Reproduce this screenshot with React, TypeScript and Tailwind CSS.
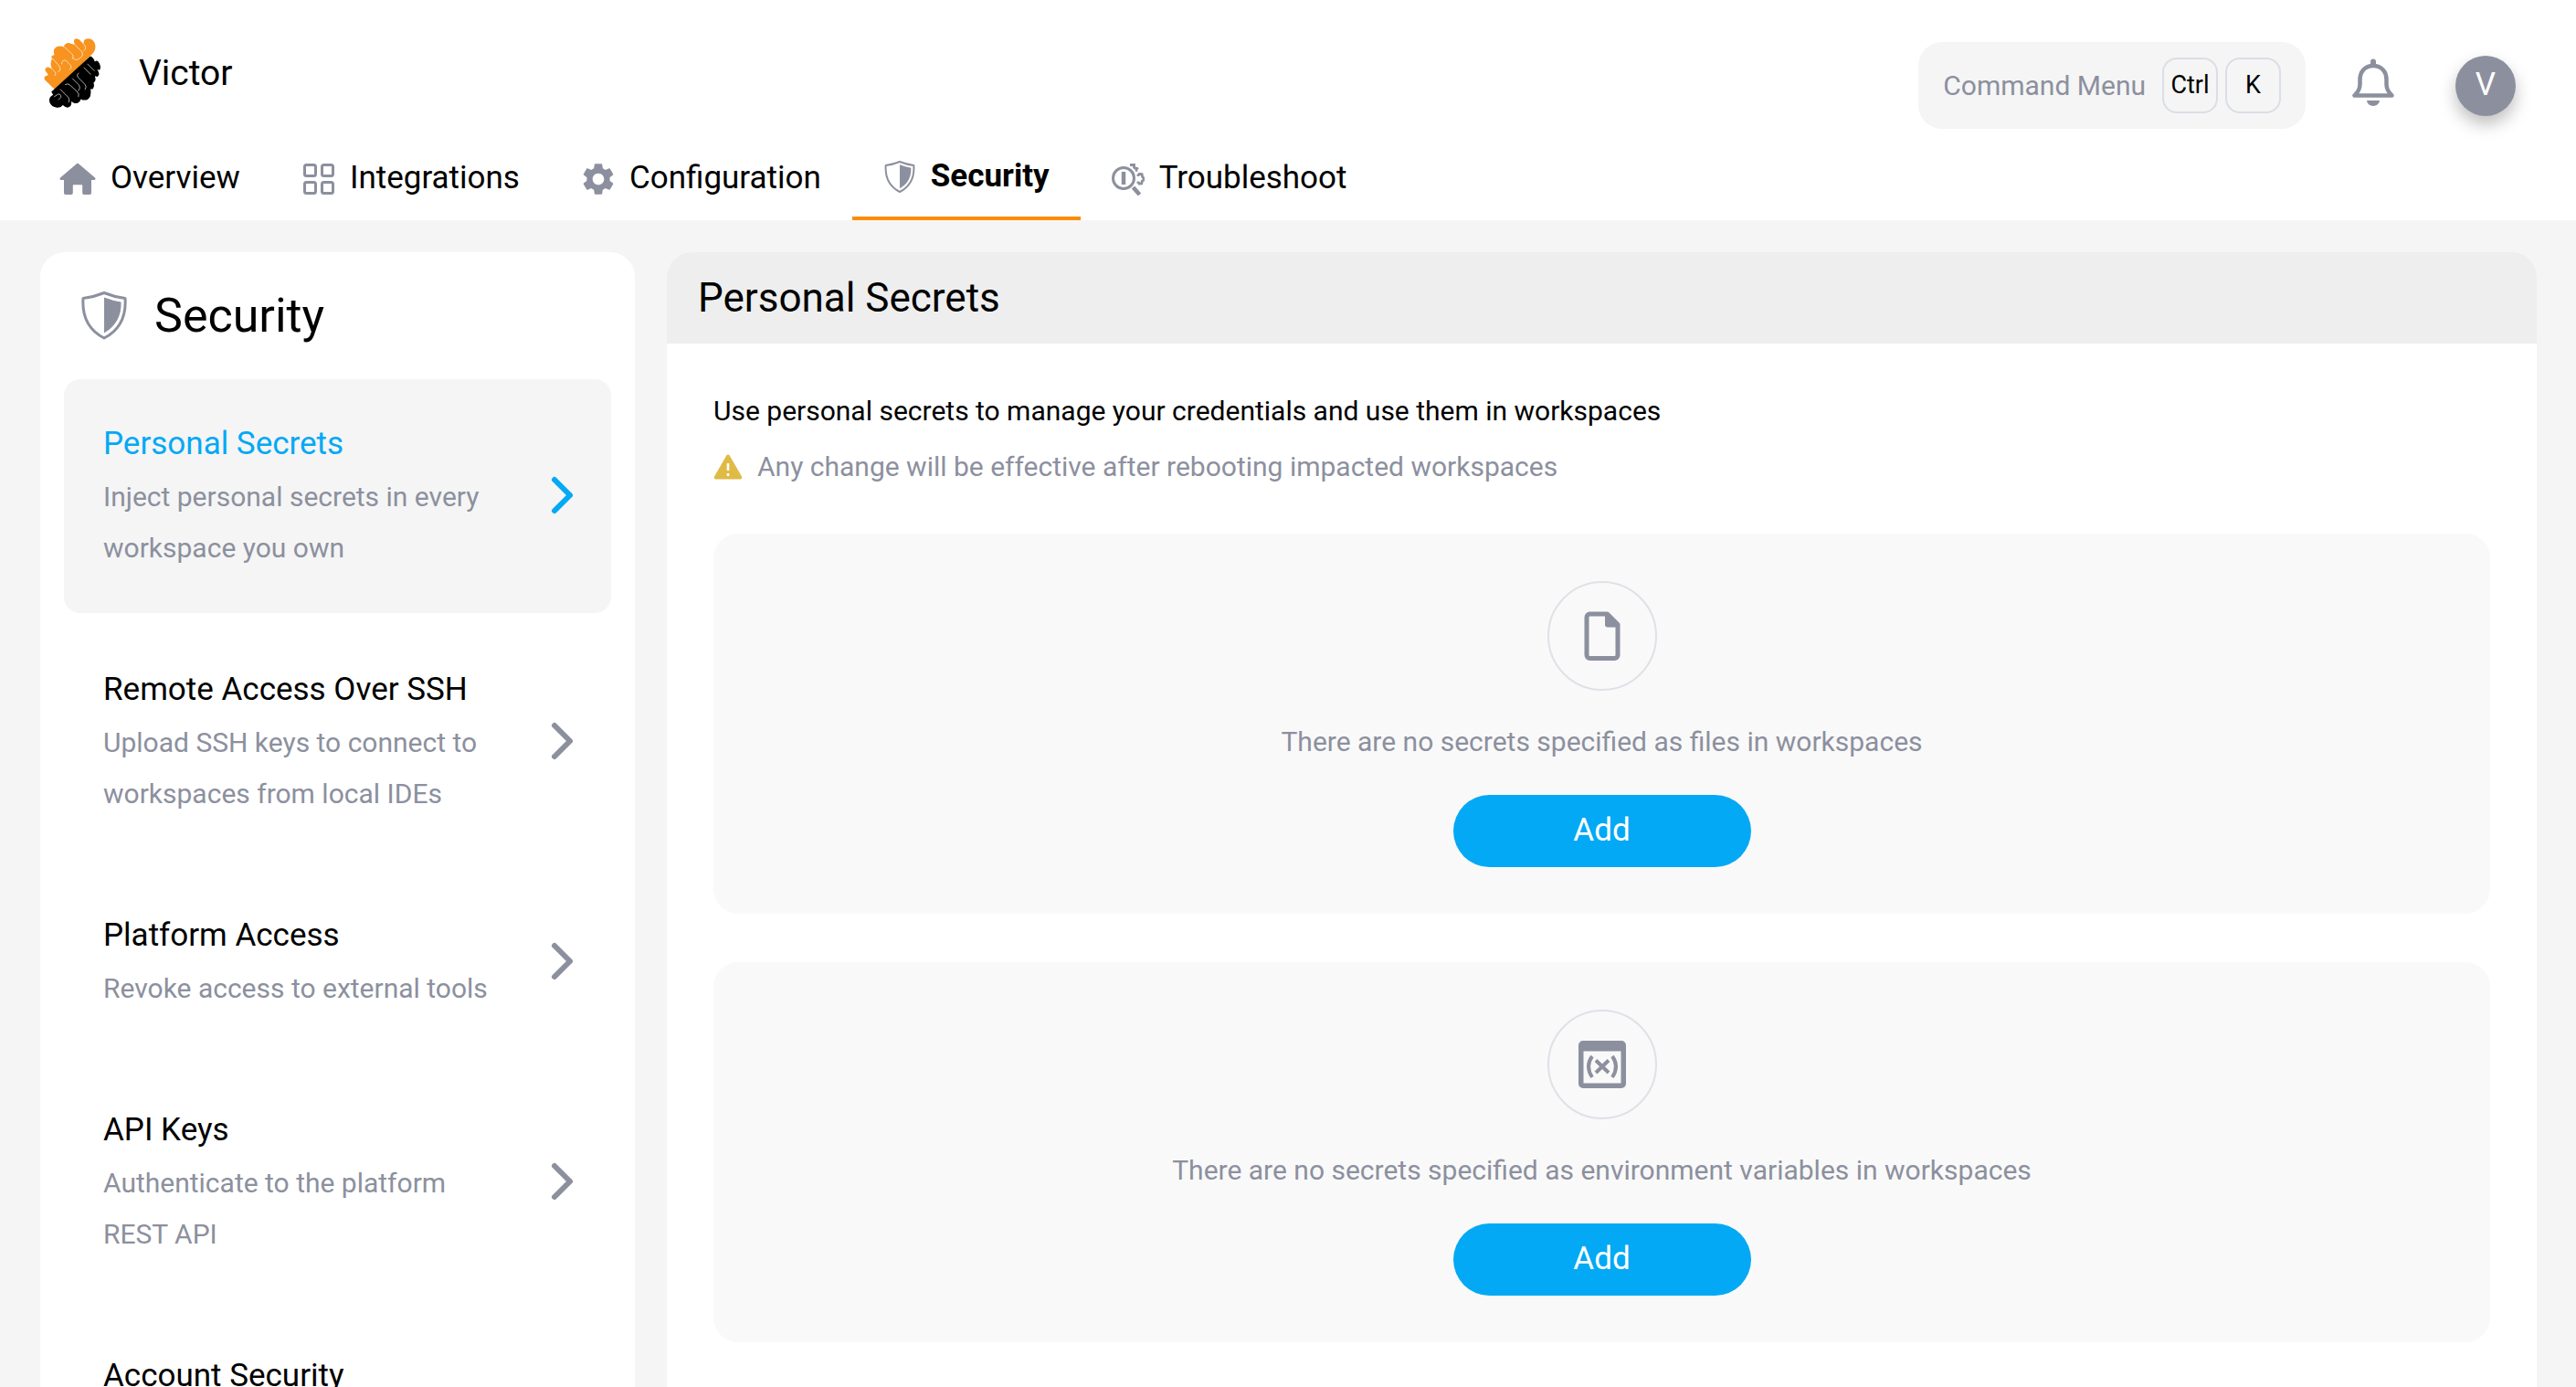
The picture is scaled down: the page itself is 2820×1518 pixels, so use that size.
import clsx from "clsx";
import type { ReactNode } from "react";
import { MdSettings } from "react-icons/md";

function Logo() {
  return (
    <svg viewBox="52 60 192 236" className="h-[78px] w-16" aria-hidden="true">
      <path
        fill="#f7931e"
        d="M90 235 54 200Q50 192 57 188L66 184 56 170Q54 158 66 158L78 164Q70 146 78 132 72 120 86 118 80 100 92 92 106 86 117 92 120 78 134 78L146 82 154 84Q146 66 158 64 168 64 176 74L184 80Q180 66 196 64 214 64 220 80 226 98 214 112Z"
      />
      <path
        d="M205 122Q216 126 220 140 228 132 234 144 242 158 236 168L228 166Q240 184 228 190L220 188Q226 204 216 210 220 224 212 232L206 230Q210 256 196 266 182 270 174 264 168 280 152 278L142 272Q146 288 130 292 122 292 114 284 108 294 94 292 76 290 70 274 66 258 82 250L76 240Z"
      />
      <g fill="none" stroke="#fff" strokeWidth="2" strokeLinecap="round" strokeLinejoin="round">
        <path d="M78 164 88 174Q94 180 88 186M78 128 100 152Q108 162 104 170L98 174M110 148Q112 132 124 136L140 152Q146 162 136 168M120 92 146 116Q152 124 146 130M154 84 178 108Q184 118 174 126L162 134Q152 136 148 128M176 74 188 88Q194 98 184 104" />
        <path d="M86 256 98 248Q108 246 108 258L100 266M106 232 132 258Q138 266 134 274M122 216Q130 210 138 218L160 238Q170 246 166 256M146 196 168 218Q174 228 166 236M166 178Q158 184 164 192L188 216Q194 224 188 232M184 160 206 182M196 148 218 170" />
      </g>
    </svg>
  );
}

function HomeIcon() {
  return (
    <svg viewBox="0 0 40 36" className="h-9 w-10" fill="currentColor" aria-hidden="true">
      <path d="M18.6 1.4a2 2 0 0 1 2.8 0L39 16.6c1 .9.5 2.4-.8 2.4H35v14.2a1.8 1.8 0 0 1-1.8 1.8H27a1.8 1.8 0 0 1-1.8-1.8V25a.8.8 0 0 0-.8-.8h-8.8a.8.8 0 0 0-.8.8v8.2A1.8 1.8 0 0 1 13 35H6.8A1.8 1.8 0 0 1 5 33.2V19H1.8c-1.3 0-1.8-1.5-.8-2.4Z" />
    </svg>
  );
}

function GridIcon() {
  return (
    <svg viewBox="0 0 36 36" className="size-9" fill="none" stroke="currentColor" strokeWidth="3" aria-hidden="true">
      <rect x="2.5" y="2.5" width="12" height="12" rx="2" />
      <rect x="21.5" y="2.5" width="12" height="12" rx="2" />
      <rect x="2.5" y="21.5" width="12" height="12" rx="2" />
      <rect x="21.5" y="21.5" width="12" height="12" rx="2" />
    </svg>
  );
}

function GearIcon() {
  return (
    <span className="flex size-9 items-center justify-center">
      <MdSettings className="size-[42px] shrink-0" aria-hidden="true" />
    </span>
  );
}

function ShieldIcon({ className }: { className: string }) {
  return (
    <svg viewBox="0 0 54 54" className={className} aria-hidden="true">
      <path
        d="M27 1.5Q38 6 50 7.5 52 38 27 51 2 38 4 7.5 16 6 27 1.5Z"
        fill="none"
        stroke="currentColor"
        strokeWidth="3"
        strokeLinejoin="round"
      />
      <path d="M27 6.5Q36 10 45.500 11.5 46.500 34 27 45.5Z" fill="currentColor" />
    </svg>
  );
}

function TroubleshootIcon() {
  return (
    <svg viewBox="0 0 36 36" className="size-9" fill="none" stroke="currentColor" aria-hidden="true">
      <circle cx="13" cy="17" r="11.5" strokeWidth="3" />
      <path d="M13 10v14" strokeWidth="4.5" />
      <path d="m23.5 27 7 8" strokeWidth="4.5" />
      <path
        d="M20 2.5h4.5v2.8l2.5 1.5 2-1.2M26 9l2-1M29 12.5l4 .2.8 3.3 1.2.8v2.4l-1.5.6-.8 3-3.7.2M29 12.5v2.5M29 23v-2.5"
        strokeWidth="2.8"
      />
    </svg>
  );
}

function BellIcon() {
  return (
    <svg viewBox="0 0 46 52" className="h-[52px] w-[46px]" aria-hidden="true">
      <path
        d="M23 8C13.5 8 8.5 15 8.5 23v5C8.5 34 6 36.5 2.5 40.5h41C40 36.5 37.5 34 37.5 28v-5C37.5 15 32.5 8 23 8Z"
        fill="none"
        stroke="currentColor"
        strokeWidth="4.5"
        strokeLinejoin="round"
      />
      <path d="M20 8V3.5a3 3 0 0 1 6 0V8ZM16 46h14a7 6 0 0 1-14 0Z" fill="currentColor" />
    </svg>
  );
}

function ChevronIcon() {
  return (
    <svg
      viewBox="0 0 40 44"
      className="h-11 w-10 shrink-0"
      fill="none"
      stroke="currentColor"
      strokeWidth="6"
      strokeLinecap="round"
      strokeLinejoin="round"
      aria-hidden="true"
    >
      <path d="m11 5 17 17-17 17" />
    </svg>
  );
}

function WarningIcon() {
  return (
    <svg viewBox="0 0 32 28" className="h-7 w-8" aria-hidden="true">
      <path
        d="M14.3 1.5a2 2 0 0 1 3.4 0l13.4 23.2A2 2 0 0 1 29.4 27.5H2.6A2 2 0 0 1 .9 24.7Z"
        fill="#dfbb45"
      />
      <path d="M16 10v8M16 21v3" stroke="#fff" strokeWidth="2.6" />
    </svg>
  );
}

function FileIcon() {
  return (
    <svg viewBox="0 0 40 54" className="h-[54px] w-10" aria-hidden="true">
      <path
        d="M6 3h19.5L37 14.5V48a3.5 3.5 0 0 1-3.5 3.5H6.5A3.5 3.5 0 0 1 3 48V6.5A3.5 3.5 0 0 1 6.5 3Z"
        fill="none"
        stroke="currentColor"
        strokeWidth="5"
        strokeLinejoin="round"
      />
      <path d="M23 2h4l12 12v3.5H26a3 3 0 0 1-3-3Z" fill="currentColor" />
    </svg>
  );
}

function VariableIcon() {
  return (
    <svg viewBox="0 0 54 54" className="size-[54px]" aria-hidden="true">
      <path
        fillRule="evenodd"
        d="M6 1h42a5 5 0 0 1 5 5v42a5 5 0 0 1-5 5H6a5 5 0 0 1-5-5V6a5 5 0 0 1 5-5Zm.5 11.5v35h41v-35Z"
        fill="currentColor"
      />
      <path
        d="M16 18Q8 29 16 41M38 18Q46 29 38 41M20 22.5 34 36M34 22.5 20 36"
        fill="none"
        stroke="currentColor"
        strokeWidth="4"
      />
    </svg>
  );
}

const tabs = [
  { label: "Overview", icon: <HomeIcon /> },
  { label: "Integrations", icon: <GridIcon /> },
  { label: "Configuration", icon: <GearIcon /> },
  { label: "Security", icon: <ShieldIcon className="size-9" />, active: true },
  { label: "Troubleshoot", icon: <TroubleshootIcon /> },
];

const sections = [
  {
    title: "Personal Secrets",
    description: "Inject personal secrets in every workspace you own",
    active: true,
  },
  {
    title: "Remote Access Over SSH",
    description: "Upload SSH keys to connect to workspaces from local IDEs",
  },
  { title: "Platform Access", description: "Revoke access to external tools" },
  { title: "API Keys", description: "Authenticate to the platform REST API" },
  { title: "Account Security" },
];

const keyStyle =
  "flex size-[61px] items-center justify-center rounded-2xl border-2 border-[#dadee5] font-[Roboto,sans-serif] text-[27px] text-black";

function EmptyCard({ icon, text }: { icon: ReactNode; text: string }) {
  return (
    <section className="flex flex-col items-center rounded-[27px] bg-[#f9f9f9] pt-[52px] pb-[51px]">
      <div className="flex size-[120px] items-center justify-center rounded-full border-2 border-[#dfe1e7] text-[#8c909e]">
        {icon}
      </div>
      <p className="mt-7 text-[30px] leading-[56px] text-[#8c909e]">{text}</p>
      <button
        type="button"
        className="mt-[30px] flex h-[79px] w-[326px] items-center justify-center rounded-full bg-[#03a9f4] text-[35px] text-white"
      >
        Add
      </button>
    </section>
  );
}

export default function App() {
  return (
    <div className="flex h-screen flex-col overflow-hidden bg-[#f5f5f5] font-[Roboto,sans-serif] text-black">
      <header className="bg-white">
        <div className="flex h-[148px] items-start justify-between pr-[66px] pl-12">
          <a href="#home" className="flex items-center gap-10 pt-[41px]">
            <Logo />
            <span className="text-[39px]">Victor</span>
          </a>
          <div className="flex items-center pt-[46px]">
            <button
              type="button"
              className="flex h-[95px] items-center gap-2 rounded-[26px] bg-[#f5f5f5] px-[27px]"
            >
              <span className="mr-2.5 text-[30px] text-[#8c909e]">Command Menu</span>
              <kbd className={keyStyle}>Ctrl</kbd>
              <kbd className={keyStyle}>K</kbd>
            </button>
            <button
              type="button"
              aria-label="Notifications"
              className="ml-[51px] pb-2 text-[#8c909e]"
            >
              <BellIcon />
            </button>
            <button
              type="button"
              className="ml-[67px] flex size-[66px] items-center justify-center rounded-full bg-[#8c909e] text-[35px] text-white shadow-[0_9px_18px_rgba(0,0,0,0.25)]"
            >
              V
            </button>
          </div>
        </div>
        <nav className="flex h-[93px] pl-[31px]">
          {tabs.map((tab) => (
            <a
              key={tab.label}
              href={"#" + tab.label.toLowerCase()}
              className={clsx(
                "flex items-center gap-4 px-[34px] pt-0.5 text-[35px]",
                tab.active && "border-b-4 border-[#fb8c00] font-bold",
              )}
            >
              <span className="text-[#8c909e]">{tab.icon}</span>
              {tab.label}
            </a>
          ))}
        </nav>
      </header>

      <main className="flex min-h-0 flex-1 gap-[35px] pt-[35px] pr-[43px] pl-11">
        <aside className="w-[651px] shrink-0 overflow-hidden rounded-t-[27px] bg-white px-[26px]">
          <h1 className="flex h-[139px] items-center gap-7 pl-[17px] text-[52px]">
            <ShieldIcon className="size-[54px] text-[#8c909e]" />
            Security
          </h1>
          <div className="flex flex-col gap-[13px]">
            {sections.map((section) => (
              <a
                key={section.title}
                href={"#" + section.title.toLowerCase().replaceAll(" ", "-")}
                className={clsx(
                  "flex items-center gap-8 rounded-[18px] pt-[41px] pr-[33px] pb-[43px] pl-[43px]",
                  section.active && "bg-[#f5f5f5]",
                )}
              >
                <div className="flex-1">
                  <h2
                    className={clsx(
                      "text-[35px] leading-[60px]",
                      section.active && "text-[#03a9f4]",
                    )}
                  >
                    {section.title}
                  </h2>
                  {section.description && (
                    <p className="text-[30px] leading-[56px] text-[#8c909e]">
                      {section.description}
                    </p>
                  )}
                </div>
                {section.description && (
                  <span className={section.active ? "text-[#03a9f4]" : "text-[#8c909e]"}>
                    <ChevronIcon />
                  </span>
                )}
              </a>
            ))}
          </div>
        </aside>

        <div className="flex-1 overflow-hidden rounded-t-[27px] bg-white">
          <h2 className="flex h-[100px] items-center bg-[#eeeeee] px-[34px] text-[44px]">
            Personal Secrets
          </h2>
          <div className="px-[51px] pt-[43px]">
            <p className="text-[30px] leading-[61px]">
              Use personal secrets to manage your credentials and use them in workspaces
            </p>
            <p className="flex items-center gap-4 text-[30px] leading-[61px] text-[#8c909e]">
              <WarningIcon />
              Any change will be effective after rebooting impacted workspaces
            </p>
            <div className="mt-[43px] flex flex-col gap-[53px]">
              <EmptyCard
                icon={<FileIcon />}
                text="There are no secrets specified as files in workspaces"
              />
              <EmptyCard
                icon={<VariableIcon />}
                text="There are no secrets specified as environment variables in workspaces"
              />
            </div>
          </div>
        </div>
      </main>
    </div>
  );
}
